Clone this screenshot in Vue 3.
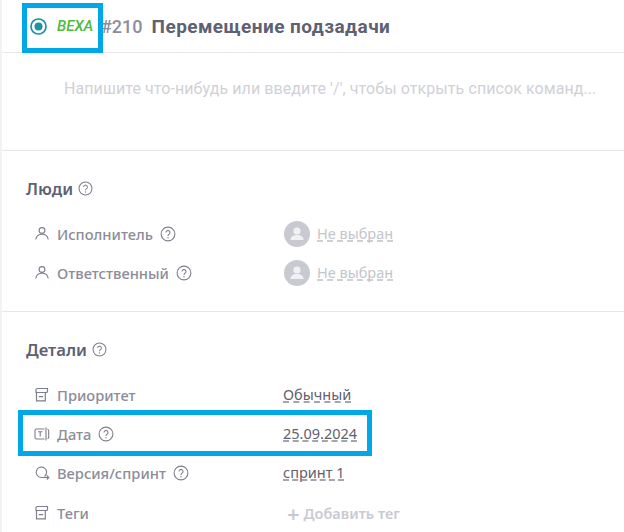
<template>
  <div class="panel">
    <header class="head">
      <svg class="status" width="17" height="17" viewBox="0 0 17 17">
        <circle cx="8.500" cy="8.500" r="7.500" fill="none" stroke="#1b93a5" stroke-width="1.700" />
        <circle cx="8.500" cy="8.500" r="4" fill="#1b93a5" />
      </svg>
      <span class="kind">ВЕХА</span>
      <span class="num">#210</span>
      <span class="title">Перемещение подзадачи</span>
    </header>

    <div class="editor">Напишите что-нибудь или введите '/', чтобы открыть список команд...</div>

    <section class="people">
      <h4 class="sec-title">Люди <HelpIcon class="sec-help" /></h4>
      <div v-for="row in people" :key="row" class="row">
        <div class="label">
          <UserIcon />
          <span>{{ row }}</span>
          <HelpIcon class="help" />
        </div>
        <div class="value">
          <svg class="avatar" width="26" height="26" viewBox="0 0 26 26">
            <circle cx="13" cy="13" r="13" fill="#c9cad1" />
            <circle cx="13" cy="10" r="3.600" fill="#f1f1f3" />
            <path d="M6.500 19c0-3.400 2.800-5 6.500-5s6.500 1.600 6.500 5z" fill="#f1f1f3" />
          </svg>
          <span class="link muted">Не выбран</span>
        </div>
      </div>
    </section>

    <section class="details">
      <h4 class="sec-title">Детали <HelpIcon class="sec-help" /></h4>
      <div class="row">
        <div class="label"><BoxIcon /><span>Приоритет</span></div>
        <div class="value"><span class="link">Обычный</span></div>
      </div>
      <div class="row">
        <div class="label">
          <svg class="ico" width="16" height="16" viewBox="0 0 16 16" fill="none" stroke="#7d7f8c" stroke-width="1.100">
            <path d="M10.500 3H2.500a1.500 1.500 0 0 0-1.500 1.500v7A1.500 1.500 0 0 0 2.500 13h8M12 1.500v13M13.500 3.200a1.500 1.500 0 0 1 1.200 1.500v6.600a1.500 1.500 0 0 1-1.200 1.500" />
            <path d="M4 5.800h4.500M6.200 5.800v4.700" />
          </svg>
          <span>Дата</span>
          <HelpIcon class="help" />
        </div>
        <div class="value"><span class="link">25.09.2024</span></div>
      </div>
      <div class="row">
        <div class="label">
          <svg class="ico" width="16" height="16" viewBox="0 0 16 16" fill="none" stroke="#7d7f8c" stroke-width="1.100">
            <path d="M10.500 11.500A5.200 5.200 0 1 0 7.200 12.500h7.300M12.800 10.500l2 2-2 2" />
          </svg>
          <span>Версия/спринт</span>
          <HelpIcon class="help" />
        </div>
        <div class="value"><span class="link">спринт 1</span></div>
      </div>
      <div class="row">
        <div class="label"><BoxIcon /><span>Теги</span></div>
        <div class="value add"><span class="plus">+</span> Добавить тег</div>
      </div>
    </section>

    <div class="mark mark-kind"></div>
    <div class="mark mark-date"></div>
  </div>
</template>

<script setup>
import { h } from 'vue'

const people = ['Исполнитель', 'Ответственный']

const HelpIcon = () =>
  h('svg', { width: 16, height: 16, viewBox: '0 0 16 16', fill: 'none', stroke: '#7d7f8c' }, [
    h('circle', { cx: 8, cy: 8, r: 6.900, 'stroke-width': 1.100 }),
    h('path', { d: 'M6 6.400a2 2 0 1 1 3.100 1.700C8.400 8.600 8 9 8 9.900', 'stroke-width': 1.100 }),
    h('circle', { cx: 8, cy: 11.700, r: 0.700, fill: '#7d7f8c', stroke: 'none' }),
  ])

const UserIcon = () =>
  h('svg', { class: 'ico', width: 16, height: 16, viewBox: '0 0 16 16', fill: 'none', stroke: '#7d7f8c', 'stroke-width': 1.100 }, [
    h('circle', { cx: 8, cy: 4.500, r: 2.900 }),
    h('path', { d: 'M1.800 13.500c.4-3.300 3-5.200 6.200-5.200s5.800 1.900 6.200 5.200' }),
  ])

const BoxIcon = () =>
  h('svg', { class: 'ico', width: 16, height: 16, viewBox: '0 0 16 16', fill: 'none', stroke: '#7d7f8c', 'stroke-width': 1.200 }, [
    h('path', { d: 'M2.500 5.500v8.300h8.800V5.500M2 5.500V2.800A1.300 1.300 0 0 1 3.300 1.500h10.200v2.700a1.300 1.300 0 0 1-1.300 1.300zM4.800 9.700h4.400' }),
  ])
</script>

<style>
html,
body {
  margin: 0;
  background: #fff;
}
</style>

<style scoped>
.panel {
  position: relative;
  width: 624px;
  height: 532px;
  box-sizing: border-box;
  overflow: hidden;
  border-left: 2px solid #f2f2f4;
  font-family: Roboto, "Noto Sans", sans-serif;
  color: #8b8d99;
}
.head {
  height: 53px;
  box-sizing: border-box;
  padding: 0 0 0 28px;
  display: flex;
  align-items: center;
  border-bottom: 1px solid #e6e6eb;
}
.status {
  flex: none;
}
.kind {
  margin-left: 10px;
  font-size: 15px;
  font-weight: 500;
  font-style: italic;
  color: #4dbb3c;
  width: 44px;
}
.num {
  font-size: 18px;
  font-weight: 500;
  color: #8b8d99;
}
.title {
  margin-left: 9px;
  font-size: 19px;
  font-weight: 700;
  letter-spacing: 0.45px;
  color: #5d6172;
}
.editor {
  height: 98px;
  box-sizing: border-box;
  padding-top: 26px;
  padding-left: 62px;
  font-size: 16px;
  letter-spacing: 0.08px;
  color: #d0d1d7;
  white-space: nowrap;
  border-bottom: 1px solid #e6e6eb;
}
.people {
  height: 161px;
  box-sizing: border-box;
  padding-top: 27px;
  border-bottom: 1px solid #e6e6eb;
}
.details {
  padding-top: 27px;
}
.details .sec-title {
  margin-bottom: 16px;
}
.details .row {
  height: 39.300px;
}
.sec-title {
  margin: 0 0 16px 24px;
  height: 20px;
  display: flex;
  align-items: center;
  font-family: "Noto Sans", sans-serif;
  font-size: 16.700px;
  font-weight: 600;
  color: #5d6172;
}
.sec-help {
  margin-left: 5px;
  width: 15px;
  height: 15px;
}
.row {
  height: 39.500px;
  display: flex;
  align-items: center;
}
.label {
  width: 281px;
  box-sizing: border-box;
  padding-left: 32px;
  display: flex;
  align-items: center;
  font-family: "Noto Sans", sans-serif;
  font-size: 14.700px;
  font-weight: 500;
  color: #8b8d99;
}
.ico {
  margin-right: 7px;
  flex: none;
}
.help {
  margin-left: 7px;
}
.value {
  display: flex;
  align-items: center;
  font-family: "Noto Sans", sans-serif;
  font-size: 14.500px;
  color: #5f616e;
}
.avatar {
  margin-left: 1px;
  margin-right: 7px;
}
.link {
  border-bottom: 2px dashed #a4a5af;
  line-height: 14px;
}
.muted {
  color: #c4c5cc;
  border-bottom-color: #cfd0d6;
}
.add {
  margin-left: 4px;
  color: #c9cad1;
  font-weight: 600;
  font-size: 14.500px;
}
.plus {
  font-size: 22px;
  line-height: 16px;
  margin-right: 4px;
}
.mark {
  position: absolute;
  box-sizing: border-box;
  border: 5px solid #00a8e8;
}
.mark-kind {
  left: 20px;
  top: 3px;
  width: 81px;
  height: 50px;
}
.mark-date {
  left: 16px;
  top: 410px;
  width: 354px;
  height: 46px;
}
</style>
